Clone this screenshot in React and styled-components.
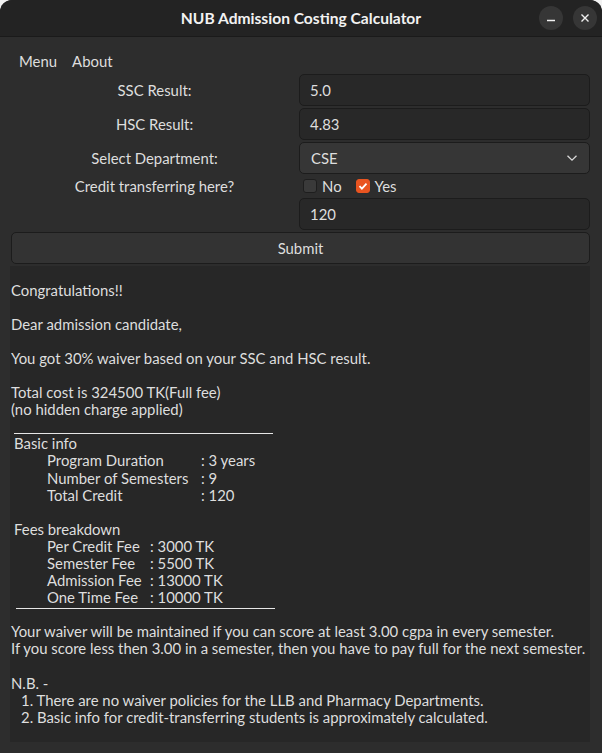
import styled, { createGlobalStyle } from "styled-components";

const GlobalStyle = createGlobalStyle`
  html, body {
    margin: 0;
    padding: 0;
    background: #f2f2f2;
  }
  body {
    font-family: Lato, "Open Sans", "DejaVu Sans", sans-serif;
    font-size: 14.9px;
    color: #dedede;
  }
`;

const basicInfo = [
  ["Program Duration", "3 years"],
  ["Number of Semesters", "9"],
  ["Total Credit", "120"],
];

const fees = [
  ["Per Credit Fee", "3000 TK"],
  ["Semester Fee", "5500 TK"],
  ["Admission Fee", "13000 TK"],
  ["One Time Fee", "10000 TK"],
];

export default function App() {
  return (
    <>
      <GlobalStyle />
      <Window>
        <TitleBar>
          <span />
          <Title>NUB Admission Costing Calculator</Title>
          <Controls>
            <RoundButton aria-label="Minimize">
              <svg width="10" height="10" viewBox="0 0 10 10">
                <path d="M1 7.5h8" stroke="#f0f0f0" strokeWidth="1.4" />
              </svg>
            </RoundButton>
            <RoundButton aria-label="Close">
              <svg width="10" height="10" viewBox="0 0 10 10">
                <path
                  d="M1.5 1.5l7 7M8.5 1.5l-7 7"
                  stroke="#f0f0f0"
                  strokeWidth="1.4"
                />
              </svg>
            </RoundButton>
          </Controls>
        </TitleBar>

        <MenuBar>
          <MenuItem>Menu</MenuItem>
          <MenuItem>About</MenuItem>
        </MenuBar>

        <Form>
          <Label>SSC Result:</Label>
          <Field>5.0</Field>
          <Label>HSC Result:</Label>
          <Field>4.83</Field>
          <Label>Select Department:</Label>
          <Select>
            CSE
            <svg width="12" height="8" viewBox="0 0 12 8">
              <path
                d="M1.5 1.8l4.5 4.4 4.5-4.4"
                fill="none"
                stroke="#d8d8d8"
                strokeWidth="1.3"
              />
            </svg>
          </Select>
          <Label>Credit transferring here?</Label>
          <Checks>
            <Check>
              <Box />
              No
            </Check>
            <Check>
              <Box $checked>
                <svg width="12" height="12" viewBox="0 0 12 12">
                  <path
                    d="M2.5 6.2l2.4 2.4 4.6-5"
                    fill="none"
                    stroke="#fff"
                    strokeWidth="1.8"
                  />
                </svg>
              </Box>
              Yes
            </Check>
          </Checks>
          <span />
          <Field>120</Field>
        </Form>

        <SubmitButton>Submit</SubmitButton>

        <Results>
          <Para>Congratulations!!</Para>
          <Para>Dear admission candidate,</Para>
          <Para>You got 30% waiver based on your SSC and HSC result.</Para>
          <Para $tight>
            Total cost is 324500 TK(Full fee)
            <br />
            (no hidden charge applied)
          </Para>
          <Rule $at={15} $left={3} />
          <Heading>Basic info</Heading>
          <InfoTable $labelWidth={154}>
            {basicInfo.map(([k, v]) => (
              <InfoRow key={k}>
                <span>{k}</span>
                <span>: {v}</span>
              </InfoRow>
            ))}
          </InfoTable>
          <Heading>Fees breakdown</Heading>
          <InfoTable $labelWidth={103} $tight>
            {fees.map(([k, v]) => (
              <InfoRow key={k}>
                <span>{k}</span>
                <span>: {v}</span>
              </InfoRow>
            ))}
          </InfoTable>
          <Rule $at={2} $left={5} />
          <Para>
            Your waiver will be maintained if you can score at least 3.00 cgpa
            in every semester.
            <br />
            If you score less then 3.00 in a semester, then you have to pay full
            for the next semester.
          </Para>
          <Para $tight>N.B. -</Para>
          <Notes>
            <li>1. There are no waiver policies for the LLB and Pharmacy Departments.</li>
            <li>2. Basic info for credit-transferring students is approximately calculated.</li>
          </Notes>
        </Results>
      </Window>
    </>
  );
}

const LINE = "17.1px";

const Window = styled.div`
  height: 753px;
  box-sizing: border-box;
  display: flex;
  flex-direction: column;
  background: #2d2d2d;
  border-radius: 12px 12px 0 0;
  overflow: hidden;
`;

const TitleBar = styled.div`
  height: 36px;
  flex: none;
  display: grid;
  grid-template-columns: 1fr auto 1fr;
  align-items: center;
  background: #232323;
  border-bottom: 1px solid #1a1a1a;
`;

const Title = styled.div`
  font-family: Lato, "Open Sans", sans-serif;
  font-weight: 700;
  font-size: 15.6px;
  color: #f2f2f2;
`;

const Controls = styled.div`
  justify-self: end;
  display: flex;
  gap: 10px;
  padding-right: 5px;
`;

const RoundButton = styled.button`
  width: 24px;
  height: 24px;
  border-radius: 50%;
  border: none;
  padding: 0;
  background: #363636;
  display: flex;
  align-items: center;
  justify-content: center;
`;

const MenuBar = styled.div`
  height: 37px;
  flex: none;
  box-sizing: border-box;
  display: flex;
  align-items: flex-end;
  gap: 15px;
  padding: 0 0 4px 19px;
`;

const MenuItem = styled.span`
  line-height: ${LINE};
`;

const Form = styled.div`
  display: grid;
  grid-template-columns: 289px 291px;
  row-gap: 2px;
  padding: 0 12px 0 10px;
  align-items: center;
`;

const Label = styled.div`
  text-align: center;
`;

const Field = styled.div`
  height: 32px;
  box-sizing: border-box;
  display: flex;
  align-items: center;
  padding-left: 10px;
  background: #282828;
  border: 1px solid #1c1c1c;
  border-radius: 5px;
`;

const Select = styled(Field)`
  justify-content: space-between;
  padding: 0 11px 0 11px;
  background: #363636;
`;

const Checks = styled.div`
  height: 20px;
  display: flex;
  align-items: center;
  gap: 14px;
  padding-left: 4px;
`;

const Check = styled.label`
  display: flex;
  align-items: center;
  gap: 5px;
`;

const Box = styled.span`
  width: 14px;
  height: 14px;
  border-radius: 3px;
  box-sizing: border-box;
  display: flex;
  align-items: center;
  justify-content: center;
  background: ${(p) => (p.$checked ? "#e95420" : "#3a3a3a")};
  border: 1px solid ${(p) => (p.$checked ? "#e95420" : "#1e1e1e")};
`;

const SubmitButton = styled.button`
  height: 32px;
  margin: 2px 12px 0 11px;
  flex: none;
  font: inherit;
  color: #dedede;
  background: #333333;
  border: 1px solid #1c1c1c;
  border-radius: 5px;
`;

const Results = styled.div`
  flex: 1;
  margin: 2px 12px 11px 10px;
  padding: 15.5px 0 0 1px;
  background: #272727;
  line-height: ${LINE};
`;

const Para = styled.p`
  margin: 0 0 ${(p) => (p.$tight ? "0" : LINE)};
  white-space: nowrap;
`;

const Rule = styled.div`
  height: ${LINE};
  position: relative;
  &::after {
    content: "";
    position: absolute;
    left: ${(p) => p.$left}px;
    top: ${(p) => p.$at}px;
    width: 259px;
    height: 1px;
    background: #e6e6e6;
  }
`;

const Heading = styled.div`
  padding-left: 3px;
`;

const InfoTable = styled.div`
  padding-left: 36px;
  margin-bottom: ${(p) => (p.$tight ? "0" : LINE)};
  display: grid;
  grid-template-columns: ${(p) => p.$labelWidth}px auto;
  justify-content: start;
`;

const InfoRow = styled.div`
  display: contents;
`;

const Notes = styled.ul`
  list-style: none;
  margin: 0;
  padding-left: 10px;
`;
